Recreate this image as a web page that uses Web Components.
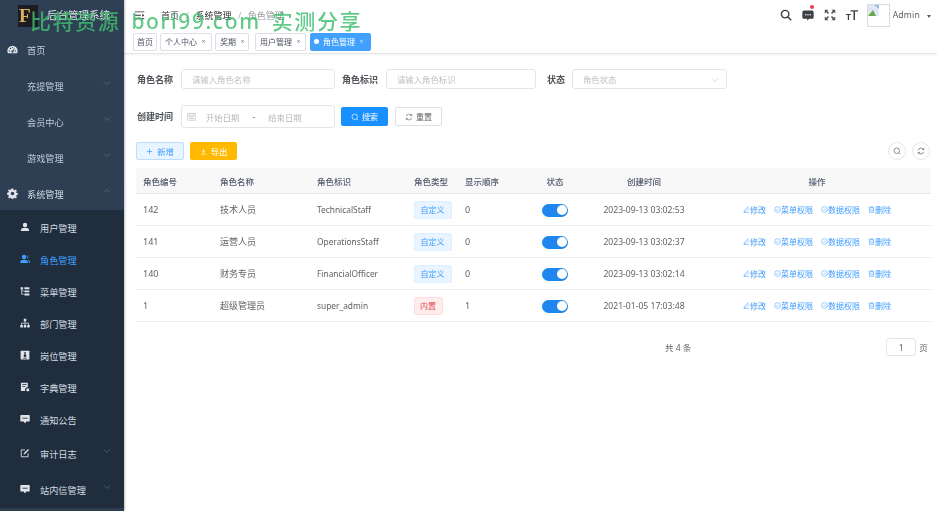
<!DOCTYPE html>
<html lang="zh"><head><meta charset="utf-8"><title>角色管理</title>
<style>
html,body{margin:0;height:100%;overflow:hidden;background:#fff}
body{font-family:"Noto Sans","Noto Sans CJK SC",sans-serif;font-size:9px;color:#606266}
</style></head><body>
<x-app>
  <x-sidebar slot="side">
    <x-menu icon="dash" label="首页"></x-menu>
    <x-menu label="充提管理" arrow="down"></x-menu>
    <x-menu label="会员中心" arrow="down"></x-menu>
    <x-menu label="游戏管理" arrow="down"></x-menu>
    <x-menu icon="gear" label="系统管理" arrow="up" bright parent></x-menu>
    <x-menu sub first icon="user" label="用户管理"></x-menu>
    <x-menu sub active icon="role" label="角色管理"></x-menu>
    <x-menu sub icon="tree" label="菜单管理"></x-menu>
    <x-menu sub icon="org" label="部门管理"></x-menu>
    <x-menu sub icon="post" label="岗位管理"></x-menu>
    <x-menu sub icon="dict" label="字典管理"></x-menu>
    <x-menu sub icon="msg" label="通知公告"></x-menu>
    <x-menu sub icon="log" label="审计日志" arrow="down" tall></x-menu>
    <x-menu sub icon="msg" label="站内信管理" arrow="down" tall></x-menu>
  </x-sidebar>
  <x-topbar></x-topbar>
  <x-tags>
    <x-tag style="width:24px">首页</x-tag><x-tag close style="width:52px;margin-left:3px">个人中心</x-tag><x-tag close style="width:34px;margin-left:3px">奖期</x-tag><x-tag close style="width:51px;margin-left:6px">用户管理</x-tag><x-tag close active style="width:61px;margin-left:4px">角色管理</x-tag>
  </x-tags>
  <x-filters></x-filters>
  <x-toolbar></x-toolbar>
  <x-table></x-table>
  <x-pager></x-pager>
  <x-watermark>比特资源 bori99.com 实测分享</x-watermark>
</x-app>
<script>
const ICONS={
 dash:'<svg viewBox="0 0 16 16"><path fill="currentColor" d="M8 2.5A7.5 7.5 0 0 0 .5 10c0 1.3.4 2.5 1 3.5h13c.6-1 1-2.2 1-3.5A7.500 7.500 0 0 0 8 2.500z"/><g fill="#2f4055"><circle cx="3.600" cy="10" r="1"/><circle cx="5" cy="6.500" r="1"/><circle cx="8" cy="5.200" r="1"/><circle cx="12.400" cy="10" r="1"/><circle cx="8" cy="11" r="1.600"/><path d="M7.400 10.500 10.800 6l.7.5-3 5z"/></g></svg>',
 gear:'<svg viewBox="0 0 16 16"><path fill="currentColor" fill-rule="evenodd" d="M6.800.8h2.400l.4 2 1.400.6 1.700-1.100 1.700 1.700-1.100 1.700.6 1.400 2 .4v2.400l-2 .4-.6 1.400 1.100 1.700-1.700 1.700-1.700-1.100-1.400.6-.4 2H6.800l-.4-2-1.400-.6-1.700 1.100-1.700-1.700 1.100-1.700-.6-1.400-2-.4V7l2-.4.6-1.400-1.100-1.700L2.300 1.800 4 2.900l1.400-.6zM8 5.400a2.600 2.600 0 1 0 0 5.200 2.600 2.600 0 0 0 0-5.200z"/></svg>',
 user:'<svg viewBox="0 0 16 16"><circle fill="currentColor" cx="8" cy="4.800" r="3.500"/><path fill="currentColor" d="M1.500 14.500v-2c0-2.200 2.500-3.500 6.500-3.500s6.500 1.300 6.500 3.500v2z"/></svg>',
 role:'<svg viewBox="0 0 16 16"><circle fill="currentColor" cx="6.500" cy="4.800" r="3.500"/><path fill="currentColor" d="M.5 14.500v-2c0-2.200 2-3.500 6-3.500s6 1.300 6 3.500v2z"/><path fill="currentColor" d="M11 1.800c1.500.4 2.300 1.600 2.300 3s-.8 2.500-2 3c.9-2 .9-4-.3-6zM13 9c1.700.5 2.800 1.500 2.800 3v2.500H14v-2.400c0-1.200-.3-2.200-1-3.100z"/></svg>',
 tree:'<svg viewBox="0 0 16 16" fill="currentColor"><path d="M1 2h4v3H1zM7 2h8v3H7zM7 7h8v3H7zM7 12h8v3H7zM2.200 5h1.300v2h2.500v1.300H3.500v4H6v1.300H2.200z"/></svg>',
 org:'<svg viewBox="0 0 16 16" fill="currentColor"><path d="M6 1h4v4H6zM7.400 5h1.200v2.400H14V11h-1.200V8.600H8.600V11H7.400V8.600H3.200V11H2V7.400h5.400zM.5 11h4v4h-4zM6 11h4v4H6zM11.500 11h4v4h-4z"/></svg>',
 post:'<svg viewBox="0 0 16 16"><path fill="currentColor" d="M2 1h12a1 1 0 0 1 1 1v12a1 1 0 0 1-1 1H2a1 1 0 0 1-1-1V2a1 1 0 0 1 1-1z"/><path fill="#1f2d3d" d="M7 3h2v4.200a2.200 2.200 0 1 1-2 0zM5 12.500h6v1H5z"/></svg>',
 dict:'<svg viewBox="0 0 16 16"><path fill="currentColor" d="M1.500 1h11v7.500a4 4 0 0 0-4 6H1.500z"/><path fill="#1f2d3d" d="M3.500 3.500h7v1.200h-7zM3.500 6.500h5v1.200h-5z"/><circle fill="currentColor" cx="12.500" cy="12.500" r="2.500"/></svg>',
 msg:'<svg viewBox="0 0 16 16"><path fill="currentColor" d="M1.500 1.500h13a1 1 0 0 1 1 1v8.500a1 1 0 0 1-1 1H10l-2 3-2-3H1.500a1 1 0 0 1-1-1V2.500a1 1 0 0 1 1-1z"/><path fill="#1f2d3d" d="M4 6h8v1.400H4z"/></svg>',
 log:'<svg viewBox="0 0 16 16" fill="none" stroke="currentColor" stroke-width="1.400"><path d="M13 8.500V14H2V3h6"/><path d="M5.800 10.200 6.300 8l6.600-6.300 1.500 1.500L8 9.700z" fill="currentColor" stroke="none"/></svg>',
 search:'<svg viewBox="0 0 16 16" fill="none" stroke="currentColor" stroke-width="1.900"><circle cx="6.800" cy="6.800" r="5"/><path d="m10.500 10.500 4.500 4.500"/></svg>',
 chat:'<svg viewBox="0 0 16 16"><path fill="currentColor" d="M2.500 2h11a2 2 0 0 1 2 2v7a2 2 0 0 1-2 2H9.500l-2.500 2.500V13H2.500a2 2 0 0 1-2-2V4a2 2 0 0 1 2-2z"/><g fill="#fff"><circle cx="5" cy="7.500" r="1"/><circle cx="8" cy="7.500" r="1"/><circle cx="11" cy="7.500" r="1"/></g></svg>',
 full:'<svg viewBox="0 0 16 16" fill="currentColor"><path d="M1 1h5L4.300 2.700l2.500 2.500-1.500 1.500-2.500-2.500L1 6zM15 1v5l-1.700-1.700-2.500 2.500-1.500-1.500 2.500-2.500L10 1zM1 15v-5l1.700 1.700 2.500-2.500 1.500 1.500-2.500 2.500L6 15zM15 15h-5l1.700-1.700-2.500-2.500 1.500-1.500 2.500 2.500L15 10z"/></svg>',
 size:'<svg viewBox="0 0 16 16" fill="currentColor"><path d="M6 1.500h10v1.700h-4v11.300h-2V3.200H6zM0 6.500h6.500v1.400H4.100v6.600H2.400V7.900H0z"/></svg>',
 ham:'<svg viewBox="0 0 16 16" fill="currentColor"><path d="M1 2h14v1.300H1zM1 7h9v1.300H1zM1 12h14v1.300H1zM12 5.500 15 7.700 12 10z"/></svg>',
 glass:'<svg viewBox="0 0 16 16" fill="none" stroke="currentColor" stroke-width="1.300"><circle cx="7.500" cy="7.500" r="5.500"/><path d="m11.500 11.500 3 3"/></svg>',
 refresh:'<svg viewBox="0 0 16 16" fill="none" stroke="currentColor" stroke-width="1.300"><path d="M2.500 6.500A5.700 5.700 0 0 1 13 5M13.500 9.500A5.700 5.700 0 0 1 3 11"/><path d="M13.500 1.800V5.300H10M2.500 14.200V10.700H6"/></svg>',
 plus:'<svg viewBox="0 0 16 16" fill="none" stroke="currentColor" stroke-width="1.600"><path d="M8 2v12M2 8h12"/></svg>',
 down:'<svg viewBox="0 0 16 16" fill="none" stroke="currentColor" stroke-width="1.600"><path d="M8 2v8M4.500 7 8 10.500 11.500 7M2.500 14h11"/></svg>',
 cal:'<svg viewBox="0 0 16 16" fill="none" stroke="currentColor" stroke-width="1.100"><rect x="1.500" y="3" width="13" height="11.500"/><path d="M1.500 6.500h13M5 1.500v3M11 1.500v3M4 9h8M4 11.800h8"/></svg>',
 edit:'<svg viewBox="0 0 16 16" fill="none" stroke="currentColor" stroke-width="1.300"><path d="m3 10.500 7.500-8 3 2.800-7.800 8L2.500 14zM1.500 15.300h13"/></svg>',
 check:'<svg viewBox="0 0 16 16" fill="none" stroke="currentColor" stroke-width="1.200"><circle cx="8" cy="8" r="6.500"/><path d="m5 8 2.200 2.200L11 6"/></svg>',
 del:'<svg viewBox="0 0 16 16" fill="none" stroke="currentColor" stroke-width="1.300"><path d="M1.500 4h13M5.500 4V1.700h5V4M3.200 4v10.500h9.600V4M6.500 7v5M9.500 7v5"/></svg>',
 chev:'<svg viewBox="0 0 16 16" fill="none" stroke="currentColor" stroke-width="1.100"><path d="m2 5 6 6 6-6"/></svg>'
};
const svg=(n,s)=>`<span class="i" style="width:${s}px;height:${s}px;display:inline-flex;flex:none">${ICONS[n].replace('<svg ','<svg width="'+s+'" height="'+s+'" ')}</span>`;
const FONT='"Noto Sans","Noto Sans CJK SC",sans-serif';
class Base extends HTMLElement{
  constructor(){super();this.attachShadow({mode:'open'})}
  html(s){this.shadowRoot.innerHTML=s}
}
customElements.define('x-app',class extends Base{connectedCallback(){this.html(`<style>
:host{display:grid;grid-template-columns:124px 1fr;grid-template-rows:30px 24px auto auto auto auto;width:937px;height:511px;position:relative;overflow:hidden;font-family:${FONT};filter:blur(.3px)}
.side{grid-row:1/8;display:block}
</style><slot name="side" class="side"></slot><slot></slot>`)}});
customElements.define('x-sidebar',class extends Base{connectedCallback(){this.html(`<style>
:host{display:block;height:511px;background:linear-gradient(#2f4055,#2c3d50);box-shadow:1px 0 2px rgba(0,0,0,.25);position:relative}
.logo{display:flex;align-items:center;height:32px;padding-left:18px;gap:9px;box-sizing:border-box}
.mark{width:20px;height:22px;background:#1c1c22;color:#d8b25c;font:700 19px/22px "Liberation Serif",serif;text-indent:1px;overflow:hidden}
.t{color:#e5e9ee;font-size:10.5px;margin-top:-4px}
</style><div class="logo"><div class="mark">F</div><div class="t">后台管理系统</div></div><slot></slot>`)}});
customElements.define('x-menu',class extends Base{connectedCallback(){
 const sub=this.hasAttribute('sub'),act=this.hasAttribute('active'),tall=this.hasAttribute('tall'),ic=this.getAttribute('icon'),ar=this.getAttribute('arrow'),br=this.hasAttribute('bright'),first=this.hasAttribute('first'),par=this.hasAttribute('parent');
 const h=first?34:par?34:(sub&&!tall?32:36);
 this.html(`<style>
:host{display:flex;align-items:center;height:${h}px;box-sizing:border-box;padding-left:${sub?20:7}px;padding-top:${first||par?2:0}px;background:${sub?'#1f2d3d':'transparent'};color:${act?'#409eff':(sub||br?'#d5dbe2':'#bfcbd9')};font-size:9.2px;position:relative}
.ic{width:${sub?12:13}px;height:12px;display:flex;margin-right:${sub?8:7}px;color:${act?'#409eff':'#dfe4ea'};align-items:center;position:relative;top:-1px}
.ar{position:absolute;right:13px;top:50%;margin-top:-7px;color:#758395;line-height:0}
.ar.up{transform:rotate(180deg);margin-top:-6px}
</style><div class="ic">${ic?svg(ic,sub?10:11):''}</div><span>${this.getAttribute('label')}</span>${ar?`<div class="ar ${ar}">${svg('chev',8)}</div>`:''}`)}});
customElements.define('x-topbar',class extends Base{connectedCallback(){this.html(`<style>
:host{display:flex;align-items:center;height:30px;padding:0 6px 0 10px;color:#303133;font-size:9px;box-sizing:border-box}
.ham{margin-right:16px;display:flex}
.sep{color:#b4b6bb;margin:0 6.500px;font-size:9px}
.cur{color:#9a9ca1}
.r{margin-left:auto;display:flex;align-items:center;color:#3c3f44}
.r>*{display:flex}
.chat{position:relative;margin-left:10px}
.dot{position:absolute;top:-4px;right:0;width:4px;height:4px;border-radius:50%;background:#f0394a}
.av{width:23px;height:23px;border:1px solid #d8dbe0;margin:0 3px 0 0;box-sizing:border-box;position:relative;margin-left:9px;overflow:hidden}
.av svg{display:block}
.nm{font-size:8.6px;color:#5a5e66;letter-spacing:.2px}
.car{width:0;height:0;border:2.500px solid transparent;border-top:3px solid #5a5e66;margin:4px 0 0 7px}
</style><div class="ham">${svg('ham',11)}</div><span>首页</span><span class="sep">/</span><span>系统管理</span><span class="sep">/</span><span class="cur">角色管理</span>
<div class="r"><div>${svg('search',12)}</div><div class="chat">${svg('chat',12)}<i class="dot"></i></div><div style="margin-left:10px;color:#555">${svg('full',12)}</div><div style="margin-left:10px">${svg('size',12)}</div>
<div class="av"><svg width="11" height="11" viewBox="0 0 11 11"><path fill="#dfe9f5" d="M0 0h11v11H0z"/><path fill="#6aa84f" d="M0 11 5 5l3 6z"/><path fill="#9ab8e0" d="M6 0h5v4z"/></svg></div><span class="nm">Admin</span><i class="car"></i></div>`)}});
customElements.define('x-tags',class extends Base{connectedCallback(){this.html(`<style>
:host{display:flex;align-items:center;height:24px;padding-left:9px;box-sizing:border-box;border-bottom:1px solid #e4e5e8;box-shadow:0 1px 2px rgba(0,0,0,.05)}
</style><slot></slot>`)}});
customElements.define('x-tag',class extends Base{connectedCallback(){const a=this.hasAttribute('active'),c=this.hasAttribute('close');this.html(`<style>
:host{display:flex;align-items:center;height:18px;box-sizing:border-box;padding-left:${a?3:c?4:3}px;border:1px solid ${a?'#42a1ff':'#dcdfe6'};border-radius:2px;background:${a?'#42a1ff':'#fff'};color:${a?'#fff':'#495060'};font-size:8px;white-space:nowrap;flex:none}
.d{width:5px;height:5px;border-radius:50%;background:#fff;margin-right:4px}
.x{margin-left:4.500px;font-size:7px;opacity:.7}
</style>${a?'<i class="d"></i>':''}<slot></slot>${c?'<span class="x">×</span>':''}`)}});
customElements.define('x-filters',class extends Base{connectedCallback(){
 const lb=(t,w)=>`<label style="width:${w}px">${t}</label>`;
 this.html(`<style>
:host{display:flex;flex-direction:column;padding:15px 0 0 13px;color:#606266;font-size:9px}
.row{display:flex;align-items:center}
.r1{height:20px}.r2{height:23px;margin-top:16px}
label{font-weight:700;color:#505359;font-size:9px;white-space:nowrap;flex:none}
.f{height:20px;border:1px solid #e2e5ea;border-radius:3px;box-sizing:border-box;display:flex;align-items:center;color:#bdc0c6;font-size:8.4px;padding-left:10px;flex:none;position:relative}
.date{height:23px;padding-left:5px;color:#b5b8bd}
.btn{height:19px;border-radius:2px;display:flex;align-items:center;justify-content:center;gap:3px;box-sizing:border-box;font-size:8px;flex:none}
.p{background:#1890ff;color:#fff;width:47px;margin-left:6px}
.d{border:1px solid #dcdfe6;color:#606266;width:47px;margin-left:7px}
.chev{position:absolute;right:7px;top:6px;color:#c0c4cc;line-height:0}
</style><div class="row r1">${lb('角色名称',44)}<div class="f" style="width:154px">请输入角色名称</div><label style="width:44px;margin-left:7px">角色标识</label><div class="f" style="width:150px">请输入角色标识</div><label style="width:25px;margin-left:11px">状态</label><div class="f" style="width:155px">角色状态<span class="chev">${svg('chev',8)}</span></div></div>
<div class="row r2">${lb('创建时间',44)}<div class="f date" style="width:154px">${svg('cal',9)}<span style="margin-left:10px">开始日期</span><span style="margin:0 13px;color:#606266">-</span><span>结束日期</span></div><div class="btn p">${svg('glass',8)}<span>搜索</span></div><div class="btn d">${svg('refresh',8)}<span>重置</span></div></div>`)}});
customElements.define('x-toolbar',class extends Base{connectedCallback(){this.html(`<style>
:host{display:flex;align-items:center;height:18px;margin-top:14px;padding:0 7px 0 12px;font-size:8.4px}
.b{height:18px;width:48px;border-radius:2px;display:flex;align-items:center;justify-content:center;gap:4px;box-sizing:border-box}
.a{background:#e8f4ff;border:1px solid #badeff;color:#3f9eff}
.e{background:#ffba00;color:#fff;margin-left:6px;width:47px}
.c{width:18px;height:18px;border:1px solid #e4e6ea;border-radius:50%;box-sizing:border-box;display:flex;align-items:center;justify-content:center;color:#55585e;margin-left:6px}
</style><div class="b a">${svg('plus',7)}<span>新增</span></div><div class="b e">${svg('down',7)}<span>导出</span></div><div style="margin-left:auto"></div><div class="c">${svg('glass',8)}</div><div class="c">${svg('refresh',8)}</div>`)}});
customElements.define('x-table',class extends Base{connectedCallback(){
 const cols='77px 97px 97px 51px 67px 60px 118px 228px';
 const rows=[['142','技术人员','TechnicalStaff',0,'0','2023-09-13 03:02:53'],['141','运营人员','OperationsStaff',0,'0','2023-09-13 03:02:37'],['140','财务专员','FinancialOfficer',0,'0','2023-09-13 03:02:14'],['1','超级管理员','super_admin',1,'1','2021-01-05 17:03:48']];
 const ops=`<span class="o">${svg('edit',7)}修改</span><span class="o">${svg('check',7)}菜单权限</span><span class="o">${svg('check',7)}数据权限</span><span class="o">${svg('del',7)}删除</span>`;
 this.html(`<style>
:host{display:block;margin:8px 6px 0 12px;font-size:9px;color:#606266}
.r{display:grid;grid-template-columns:${cols};height:32px;align-items:center;border-bottom:1px solid #e8eaee;box-sizing:border-box}
.h{height:26px;background:#f8f8f9;color:#515a6e;font-weight:500;border-bottom:1px solid #e4e6ea;font-size:8.500px}
.c{padding-left:7px;white-space:nowrap}
.ce{text-align:center}
.code{font-size:8.350px}
.dt{font-size:8.600px}
.tag{display:inline-flex;height:18px;align-items:center;padding:0 6px;border-radius:2px;font-size:8px;border:1px solid #e0effc;background:#e8f4ff;color:#409eff;box-sizing:border-box;margin-left:-.5px}
.tag.in{background:#ffeded;border-color:#ffdbdb;color:#e0494f;padding:0 5.500px}
.sw{display:inline-block;width:26px;height:13px;border-radius:7px;background:#1e86ee;position:relative;vertical-align:middle}
.sw::after{content:"";position:absolute;right:1.500px;top:1.500px;width:10px;height:10px;border-radius:50%;background:#fff}
.ops{display:flex;gap:8px;justify-content:center;color:#409eff;font-size:8px;margin-top:-1px}
.o{display:inline-flex;align-items:center;white-space:nowrap}
</style><div class="r h"><div class="c">角色编号</div><div class="c">角色名称</div><div class="c">角色标识</div><div class="c">角色类型</div><div class="c">显示顺序</div><div class="ce">状态</div><div class="ce">创建时间</div><div class="ce">操作</div></div>
${rows.map(r=>`<div class="r"><div class="c">${r[0]}</div><div class="c">${r[1]}</div><div class="c code">${r[2]}</div><div class="c"><span class="tag ${r[3]?'in':''}">${r[3]?'内置':'自定义'}</span></div><div class="c">${r[4]}</div><div class="ce"><span class="sw"></span></div><div class="ce dt">${r[5]}</div><div class="ops">${ops}</div></div>`).join('')}`)}});
customElements.define('x-pager',class extends Base{connectedCallback(){this.html(`<style>
:host{display:flex;align-items:center;height:18px;margin-top:16px;padding-left:541px;font-size:8.500px;color:#606266}
.n{width:30px;height:18px;border:1px solid #e2e5ea;border-radius:3px;box-sizing:border-box;display:flex;align-items:center;justify-content:center;margin-left:195px}
.p{margin-left:3px}
</style><span>共 4 条</span><div class="n">1</div><span class="p">页</span>`)}});
customElements.define('x-watermark',class extends Base{connectedCallback(){this.html(`<style>
:host{position:absolute;left:30px;top:6px;color:rgba(64,190,110,.82);font:500 21px/30px ${FONT};white-space:nowrap;letter-spacing:1.600px;word-spacing:4px;pointer-events:none}
</style><slot></slot>`)}});
</script></body></html>
